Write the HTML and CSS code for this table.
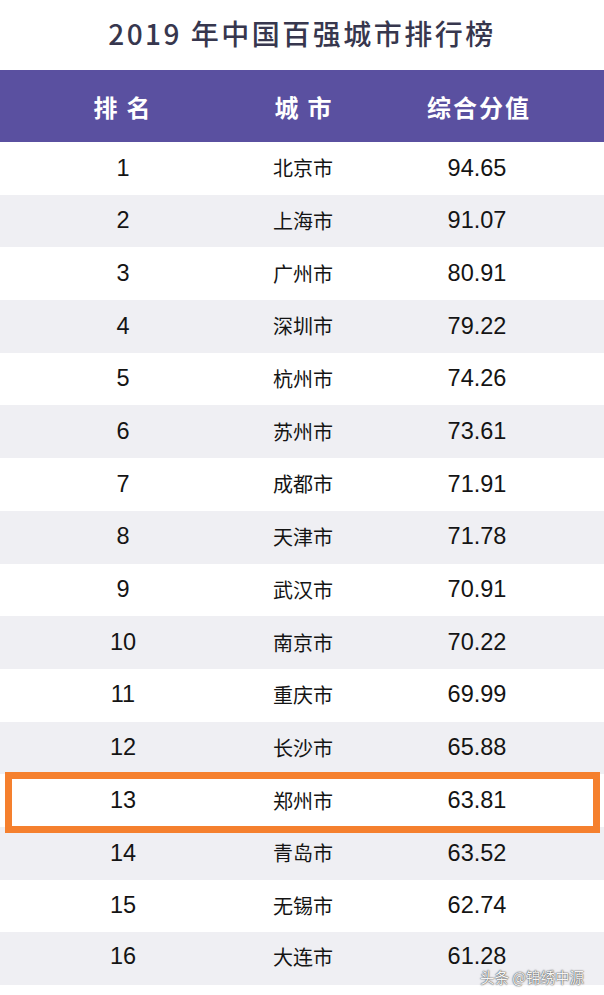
FILE: index.html
```html
<!DOCTYPE html>
<html lang="zh-CN">
<head>
<meta charset="utf-8">
<title>2019 年中国百强城市排行榜</title>
<link rel="stylesheet" href="styles.css">
</head>
<body>
<div class="page">
  <h1 class="title">2019 年中国百强城市排行榜</h1>
  <div class="table">
    <div class="row head">
      <div class="cell h-rank">排名</div>
      <div class="cell h-city">城市</div>
      <div class="cell h-score">综合分值</div>
    </div>
    <div class="row"><div class="cell num">1</div><div class="cell city">北京市</div><div class="cell num">94.65</div></div>
    <div class="row alt"><div class="cell num">2</div><div class="cell city">上海市</div><div class="cell num">91.07</div></div>
    <div class="row"><div class="cell num">3</div><div class="cell city">广州市</div><div class="cell num">80.91</div></div>
    <div class="row alt"><div class="cell num">4</div><div class="cell city">深圳市</div><div class="cell num">79.22</div></div>
    <div class="row"><div class="cell num">5</div><div class="cell city">杭州市</div><div class="cell num">74.26</div></div>
    <div class="row alt"><div class="cell num">6</div><div class="cell city">苏州市</div><div class="cell num">73.61</div></div>
    <div class="row"><div class="cell num">7</div><div class="cell city">成都市</div><div class="cell num">71.91</div></div>
    <div class="row alt"><div class="cell num">8</div><div class="cell city">天津市</div><div class="cell num">71.78</div></div>
    <div class="row"><div class="cell num">9</div><div class="cell city">武汉市</div><div class="cell num">70.91</div></div>
    <div class="row alt"><div class="cell num">10</div><div class="cell city">南京市</div><div class="cell num">70.22</div></div>
    <div class="row"><div class="cell num">11</div><div class="cell city">重庆市</div><div class="cell num">69.99</div></div>
    <div class="row alt"><div class="cell num">12</div><div class="cell city">长沙市</div><div class="cell num">65.88</div></div>
    <div class="row highlight"><div class="cell num">13</div><div class="cell city">郑州市</div><div class="cell num">63.81</div></div>
    <div class="row alt"><div class="cell num">14</div><div class="cell city">青岛市</div><div class="cell num">63.52</div></div>
    <div class="row"><div class="cell num">15</div><div class="cell city">无锡市</div><div class="cell num">62.74</div></div>
    <div class="row alt last"><div class="cell num">16</div><div class="cell city">大连市</div><div class="cell num">61.28</div></div>
  </div>
  <div class="watermark">头条 @锦绣中源</div>
</div>
</body>
</html>
```

FILE: styles.css
```css
html, body {
  margin: 0;
  padding: 0;
  background: #ffffff;
}

.page {
  position: relative;
  width: 604px;
  height: 995px;
  overflow: hidden;
  font-family: "Liberation Sans", "Noto Sans CJK SC", sans-serif;
}

.title {
  margin: 0;
  height: 70px;
  display: flex;
  align-items: center;
  justify-content: center;
  font-family: "Noto Sans CJK SC", sans-serif;
  font-weight: 500;
  font-size: 28px;
  letter-spacing: 2.5px;
  color: #37374e;
  padding-bottom: 4px;
  box-sizing: border-box;
}

.table {
  display: flex;
  flex-direction: column;
}

.row {
  display: grid;
  grid-template-columns: 246px 114px 234px 10px;
  height: 52.7px;
  align-items: center;
  background: #ffffff;
  position: relative;
}

.row.alt {
  background: #efeff3;
}

.row.head {
  height: 72px;
  background: #5a50a0;
  color: #ffffff;
  font-family: "Noto Sans CJK SC", sans-serif;
  font-weight: 700;
  font-size: 24px;
}

.cell {
  text-align: center;
  white-space: nowrap;
}

.h-rank {
  letter-spacing: 9px;
  text-indent: 9px;
  padding-right: 2px;
}

.h-city {
  letter-spacing: 9px;
  text-indent: 9px;
}

.h-score {
  letter-spacing: 2px;
  text-indent: 2px;
  padding-left: 2px;
}

.num {
  font-family: "Liberation Sans", sans-serif;
  font-size: 23.5px;
  line-height: 1;
  color: #141414;
}

.city {
  font-family: "Noto Sans CJK SC", sans-serif;
  font-size: 20px;
  line-height: 1.2;
  color: #141414;
}

.row.last .cell {
  padding-bottom: 3px;
}

.row.highlight {
  z-index: 2;
}

.row.highlight::after {
  content: "";
  position: absolute;
  left: 5px;
  right: 4px;
  top: -2px;
  bottom: -6px;
  border: 7px solid #f5802e;
  pointer-events: none;
}

.watermark {
  position: absolute;
  left: 480px;
  top: 970px;
  font-family: "Noto Sans CJK SC", sans-serif;
  font-size: 14.5px;
  line-height: 1;
  color: #f4f4f4;
  text-shadow: 0 0 1px #333, 0 0 2px rgba(0, 0, 0, 0.6);
  white-space: nowrap;
  z-index: 3;
}
```
